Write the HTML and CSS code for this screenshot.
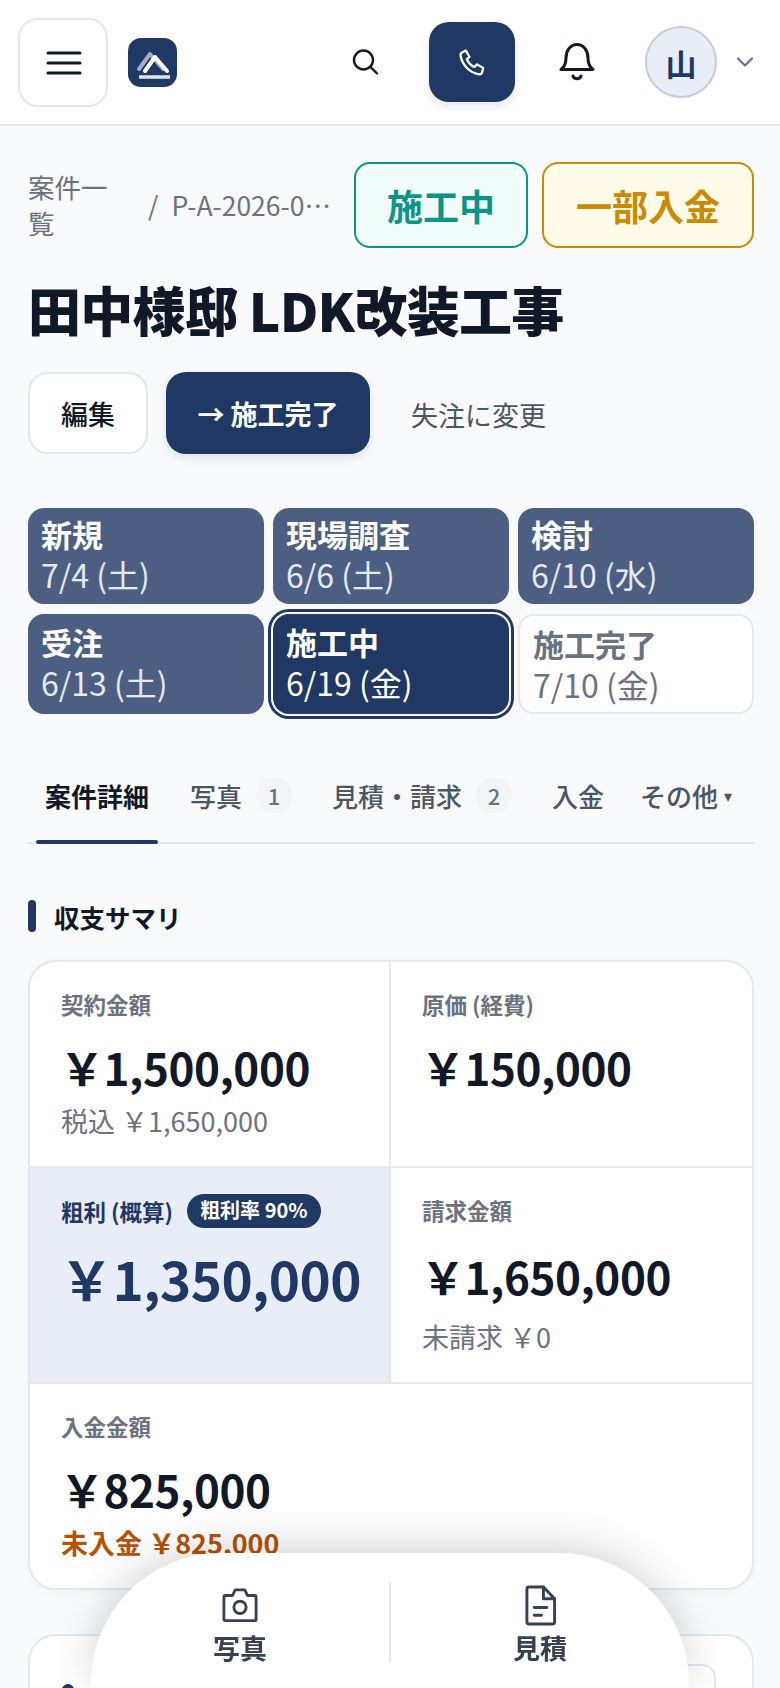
FILE: index.html
```html
<!DOCTYPE html>
<html lang="ja">
<head>
  <meta charset="UTF-8" />
  <meta name="viewport" content="width=device-width, initial-scale=1.0" />
  <title>田中様邸 LDK改装工事</title>
  <link rel="stylesheet" href="styles.css">
</head>
<body>
  <header class="topbar">
    <button class="menu-btn" aria-label="メニュー">
      <svg width="36" height="36" viewBox="0 0 36 36" fill="none" stroke="#111827" stroke-width="3" stroke-linecap="round"><path d="M2 8h32M2 18h32M2 28h32"/></svg>
    </button>
    <div class="logo">
      <svg width="48" height="48" viewBox="0 0 48 48" fill="none" stroke-linecap="round" stroke-linejoin="round">
        <path d="M11 31 L22 16 L35 31" stroke="#a3aec4" stroke-width="4"/>
        <path d="M17 33 L27 19 L39 33" stroke="#fff" stroke-width="4"/>
        <path d="M11 39h31" stroke="#dfe4ee" stroke-width="3.5" stroke-linecap="butt"/>
      </svg>
    </div>
    <div class="topbar-right">
      <button class="icon-btn search-btn" aria-label="検索">
        <svg width="30" height="30" viewBox="0 0 30 30" fill="none" stroke="#111827" stroke-width="2.4" stroke-linecap="round"><circle cx="13.5" cy="13" r="9.5"/><path d="M20.5 20l6.5 6.5"/></svg>
      </button>
      <button class="call-btn" aria-label="電話">
        <svg width="30" height="30" viewBox="0 0 24 24" fill="none" stroke="#fff" stroke-width="1.8" stroke-linejoin="round"><path d="M3.6 4.6 L7.1 2.8 L10 8 L7.9 9.7 C8.6 12 11.2 15 14 15.9 L16 13.9 L21 16.8 L20 20.6 C19.6 21.6 18.4 22 17 21.7 C9.7 20.2 4.4 14.2 2.9 7.4 C2.6 6.2 2.9 5.1 3.6 4.6 Z"/></svg>
      </button>
      <button class="icon-btn bell-btn" aria-label="通知">
        <svg width="36" height="40" viewBox="0 0 36 40" fill="none" stroke="#111827" stroke-width="3" stroke-linecap="round" stroke-linejoin="round"><path d="M2 27.5 C5.5 25 7 22 7 16 C7 8.5 11.5 2.5 18 2.5 C24.5 2.5 29 8.5 29 16 C29 22 30.5 25 34 27.5 Z"/><path d="M14 34 C15 37.5 21 37.5 22 34"/></svg>
      </button>
      <div class="avatar">山</div>
      <svg class="caret" width="18" height="12" viewBox="0 0 18 12" fill="none" stroke="#6b7280" stroke-width="2.2" stroke-linecap="round" stroke-linejoin="round"><path d="M2 2.5l7 7 7-7"/></svg>
    </div>
  </header>

  <main class="content">
    <div class="crumb-row">
      <nav class="crumbs">
        <span class="crumb-link">案件一覧</span>
        <span class="crumb-sep">/</span>
        <span class="crumb-current">P-A-2026-0…</span>
      </nav>
      <div class="badges">
        <span class="badge badge-teal">施工中</span>
        <span class="badge badge-amber">一部入金</span>
      </div>
    </div>

    <h1 class="title">田中様邸 LDK改装工事</h1>

    <div class="actions">
      <button class="btn btn-white">編集</button>
      <button class="btn btn-navy">→ 施工完了</button>
      <button class="btn btn-text">失注に変更</button>
    </div>

    <div class="steps">
      <div class="step done"><b>新規</b><span>7/4 (土)</span></div>
      <div class="step done"><b>現場調査</b><span>6/6 (土)</span></div>
      <div class="step done"><b>検討</b><span>6/10 (水)</span></div>
      <div class="step done"><b>受注</b><span>6/13 (土)</span></div>
      <div class="step current"><b>施工中</b><span>6/19 (金)</span></div>
      <div class="step todo"><b>施工完了</b><span>7/10 (金)</span></div>
    </div>

    <div class="tabs">
      <div class="tab active">案件詳細</div>
      <div class="tab">写真<span class="count">1</span></div>
      <div class="tab">見積・請求<span class="count">2</span></div>
      <div class="tab">入金</div>
      <div class="tab tab-more">その他<span class="tri">▾</span></div>
    </div>

    <h2 class="section-head">収支サマリ</h2>

    <section class="summary">
      <div class="cell">
        <div class="cell-label">契約金額</div>
        <div class="cell-value">￥1,500,000</div>
        <div class="cell-note">税込 ￥1,650,000</div>
      </div>
      <div class="cell">
        <div class="cell-label">原価 (経費)</div>
        <div class="cell-value">￥150,000</div>
      </div>
      <div class="cell cell-accent">
        <div class="cell-label">粗利 (概算)<span class="pill">粗利率 90%</span></div>
        <div class="cell-value">￥1,350,000</div>
      </div>
      <div class="cell cell-billed">
        <div class="cell-label">請求金額</div>
        <div class="cell-value">￥1,650,000</div>
        <div class="cell-note">未請求 ￥0</div>
      </div>
      <div class="cell cell-wide">
        <div class="cell-label">入金金額</div>
        <div class="cell-value">￥825,000</div>
        <div class="cell-note warn">未入金 ￥825,000</div>
      </div>
    </section>

    <section class="next-card">
      <span class="next-dot"></span>
      <span class="next-btn"></span>
    </section>
  </main>

  <nav class="dock">
    <a class="dock-item">
      <span class="dock-icon">
        <svg width="38" height="36" viewBox="0 0 40 38" fill="none" stroke="#374151" stroke-width="3" stroke-linejoin="round"><path d="M3 10.5 C3 9.5 3.7 9 4.5 9 H12 L15 3 H25 L28 9 H35.5 C36.3 9 37 9.5 37 10.5 V34 C37 35 36.3 35.5 35.5 35.5 H4.5 C3.7 35.5 3 35 3 34 Z"/><circle cx="20" cy="21.5" r="6.5"/></svg>
      </span>
      <span>写真</span>
    </a>
    <a class="dock-item">
      <span class="dock-icon">
        <svg width="33" height="41" viewBox="0 0 34 42" fill="none" stroke="#374151" stroke-width="3" stroke-linejoin="round" stroke-linecap="round"><path d="M3 4 C3 2.8 3.8 2 5 2 H20 L31.5 14 V38 C31.5 39.2 30.7 40 29.5 40 H5 C3.8 40 3 39.2 3 38 Z"/><path d="M20 2 V14 H31.5"/><path d="M10.5 23h13M10.5 31h7.5"/></svg>
      </span>
      <span>見積</span>
    </a>
  </nav>
</body>
</html>
```

FILE: styles.css
```css
* {
  box-sizing: border-box;
}

html, body {
  margin: 0;
  padding: 0;
  height: 1688px;
  overflow: hidden;
  background: #f9fafb;
  color: #111827;
  font-family: "Noto Sans CJK JP", "Noto Sans", sans-serif;
}

button {
  font-family: inherit;
  cursor: pointer;
}

.topbar {
  display: flex;
  align-items: center;
  height: 126px;
  padding: 0 18px;
  background: #ffffff;
  border-bottom: 2px solid #e5e7eb;
}

.menu-btn {
  display: flex;
  align-items: center;
  justify-content: center;
  width: 90px;
  height: 89px;
  margin-top: 1px;
  padding: 0 0 0 2px;
  background: #ffffff;
  border: 2px solid #e5e7eb;
  border-radius: 20px;
}

.logo {
  width: 49px;
  height: 49px;
  margin-left: 20px;
  background: #1f3864;
  border-radius: 13px;
}

.logo svg {
  display: block;
}

.topbar-right {
  display: flex;
  align-items: center;
  margin-left: auto;
}

.icon-btn {
  display: flex;
  align-items: center;
  justify-content: center;
  padding: 0;
  background: none;
  border: none;
}

.search-btn {
  width: 44px;
  height: 44px;
  margin-right: 42px;
}

.call-btn {
  display: flex;
  align-items: center;
  justify-content: center;
  width: 86px;
  height: 80px;
  padding: 0;
  background: #1f3864;
  border: none;
  border-radius: 20px;
  box-shadow: 0 4px 10px rgba(31, 56, 100, 0.12);
}

.bell-btn {
  width: 40px;
  height: 44px;
  margin: 0 48px 0 42px;
}

.avatar {
  display: flex;
  align-items: center;
  justify-content: center;
  width: 72px;
  height: 72px;
  background: #e8edf7;
  border: 2px solid #c5cddd;
  border-radius: 50%;
  color: #1f3864;
  font-size: 31px;
  font-weight: 700;
}

.caret {
  margin: 0 8px 0 19px;
}

.content {
  padding: 36px 26px 0 28px;
}

.crumb-row {
  display: flex;
  align-items: center;
  gap: 14px;
}

.crumbs {
  display: flex;
  align-items: center;
  flex: 1;
  min-width: 0;
  color: #6b7280;
  font-size: 26.5px;
  line-height: 36px;
}

.crumb-link {
  width: 80px;
  flex-shrink: 0;
}

.crumb-sep {
  margin: 0 13px 0 40px;
}

.crumb-current {
  white-space: nowrap;
}

.badges {
  display: flex;
  gap: 14px;
  flex-shrink: 0;
}

.badge {
  display: flex;
  align-items: center;
  justify-content: center;
  height: 86px;
  border-radius: 16px;
  border: 2px solid;
  font-size: 36px;
  font-weight: 700;
}

.badge-teal {
  width: 174px;
  color: #0d9488;
  background: #f0fdfa;
  border-color: #0d9488;
}

.badge-amber {
  width: 212px;
  color: #ca8a04;
  background: #fefce8;
  border-color: #ca8a04;
}

.title {
  margin: 25px 0 0;
  font-size: 53px;
  line-height: 72px;
  font-weight: 900;
  letter-spacing: -0.7px;
  color: #111827;
}

.actions {
  display: flex;
  align-items: center;
  margin-top: 27px;
}

.btn {
  height: 82px;
  border-radius: 20px;
  font-size: 27px;
}

.btn-white {
  width: 120px;
  margin-right: 18px;
  background: #ffffff;
  border: 2px solid #e5e7eb;
  color: #111827;
  font-weight: 500;
}

.btn-navy {
  width: 204px;
  background: #1f3864;
  border: none;
  color: #ffffff;
  font-weight: 700;
  box-shadow: 0 4px 10px rgba(31, 56, 100, 0.12);
}

.btn-text {
  margin-left: 27px;
  padding: 2px 14px 0;
  background: none;
  border: none;
  color: #4b5563;
  font-weight: 400;
}

.steps {
  display: grid;
  grid-template-columns: repeat(3, 1fr);
  grid-template-rows: 96px 100px;
  gap: 10px 9px;
  margin-top: 54px;
}

.step {
  display: flex;
  flex-direction: column;
  justify-content: center;
  padding: 0 13px 4px;
  border-radius: 16px;
  line-height: 40px;
}

.step b {
  font-size: 31px;
  font-weight: 700;
}

.step span {
  font-size: 32px;
  font-weight: 400;
}

.step.done {
  background: #4c5f82;
  color: #ffffff;
}

.step.done span {
  color: #e5e9f1;
}

.step.current {
  background: #1f3864;
  color: #ffffff;
  box-shadow: 0 0 0 2px #ffffff, 0 0 0 5px #1f3864;
}

.step.todo {
  background: #ffffff;
  border: 2px solid #e5e7eb;
  color: #6b7280;
  padding-bottom: 0;
}

.tabs {
  display: flex;
  align-items: center;
  height: 130px;
  padding-top: 50px;
  border-bottom: 2px solid #e5e7eb;
}

.tab {
  position: relative;
  display: flex;
  align-items: center;
  height: 78px;
  padding: 0 0 16px 28px;
  margin-right: 12px;
  font-size: 26px;
  font-weight: 500;
  color: #4b5563;
  white-space: nowrap;
}

.tab.active {
  padding: 0 9px 16px;
  margin: 0 4px 0 8px;
  color: #111827;
  font-weight: 700;
}

.tab.active::after {
  content: "";
  position: absolute;
  left: 0;
  right: 0;
  bottom: -2px;
  height: 4px;
  background: #1f3864;
  border-radius: 2px;
}

.tab-more {
  padding-left: 24px;
}

.count {
  display: flex;
  align-items: center;
  justify-content: center;
  width: 36px;
  height: 36px;
  margin-left: 14px;
  border-radius: 50%;
  background: #f3f4f6;
  color: #6b7280;
  font-size: 22px;
}

.tri {
  margin-left: 6px;
  font-size: 16px;
}

.section-head {
  display: flex;
  align-items: center;
  margin: 56px 0 0;
  height: 32px;
  font-size: 25.5px;
  font-weight: 700;
  color: #111827;
}

.section-head::before {
  content: "";
  width: 8px;
  height: 32px;
  margin-right: 18px;
  background: #1f3864;
  border-radius: 4px;
}

.summary {
  display: grid;
  grid-template-columns: minmax(0, 1fr) minmax(0, 1fr);
  margin-top: 28px;
  background: #ffffff;
  border: 2px solid #e5e7eb;
  border-radius: 28px;
  overflow: hidden;
  box-shadow: 0 2px 6px rgba(0, 0, 0, 0.04);
}

.cell {
  height: 206px;
  padding: 26px 30px 0 31px;
  border-right: 2px solid #e5e7eb;
  border-bottom: 2px solid #e5e7eb;
}

.cell:nth-child(2), .cell:nth-child(4) {
  border-right: none;
}

.cell:nth-child(3), .cell:nth-child(4) {
  height: 216px;
}

.cell-wide {
  grid-column: span 2;
  height: 204px;
  border: none;
}

.cell-label {
  display: flex;
  align-items: center;
  font-size: 22.5px;
  line-height: 32px;
  font-weight: 700;
  color: #6b7280;
}

.cell-value {
  margin: 12px 0 0 -1px;
  font-size: 44px;
  line-height: 70px;
  font-weight: 700;
  letter-spacing: -0.01em;
  color: #111827;
}

.cell-note {
  font-size: 27px;
  line-height: 38px;
  color: #6b7280;
}

.cell-note.warn {
  color: #b45309;
  font-weight: 700;
}

.cell-accent .cell-label {
  color: #1f3864;
}

.cell-accent {
  background: #e8edf7;
}

.cell-accent .cell-value {
  margin-top: 15px;
  font-size: 53px;
  color: #1f3864;
}

.cell-billed .cell-value {
  margin-top: 15px;
}

.cell-billed .cell-note {
  margin-top: 7px;
}

.pill {
  margin-left: 14px;
  padding: 0 13px;
  height: 34px;
  line-height: 32px;
  background: #1f3864;
  color: #ffffff;
  border-radius: 17px;
  font-size: 20px;
  font-weight: 700;
}

.next-card {
  position: relative;
  height: 200px;
  margin-top: 44px;
  background: #ffffff;
  border: 2px solid #e5e7eb;
  border-radius: 28px;
}

.next-dot {
  position: absolute;
  left: 32px;
  top: 48px;
  width: 12px;
  height: 12px;
  background: #1f3864;
  border-radius: 50%;
}

.next-btn {
  position: absolute;
  right: 36px;
  top: 28px;
  width: 80px;
  height: 70px;
  border: 2px solid #e5e7eb;
  border-radius: 14px;
}

.dock {
  position: fixed;
  left: 91px;
  top: 1553px;
  width: 598px;
  height: 135px;
  display: flex;
  padding-top: 29px;
  background: #ffffff;
  border-radius: 130px 130px 0 0;
  box-shadow: 0 -8px 40px rgba(0, 0, 0, 0.16);
}

.dock-item {
  display: flex;
  flex-direction: column;
  align-items: center;
  width: 50%;
  height: 80px;
  padding-top: 2px;
  color: #374151;
  font-size: 27px;
  line-height: 36px;
  font-weight: 700;
}

.dock-icon {
  display: flex;
  flex-shrink: 0;
  align-items: center;
  justify-content: center;
  height: 42px;
  margin-bottom: 4px;
}

.dock-item:first-child {
  border-right: 2px solid #e5e7eb;
  width: 301px;
}
```
